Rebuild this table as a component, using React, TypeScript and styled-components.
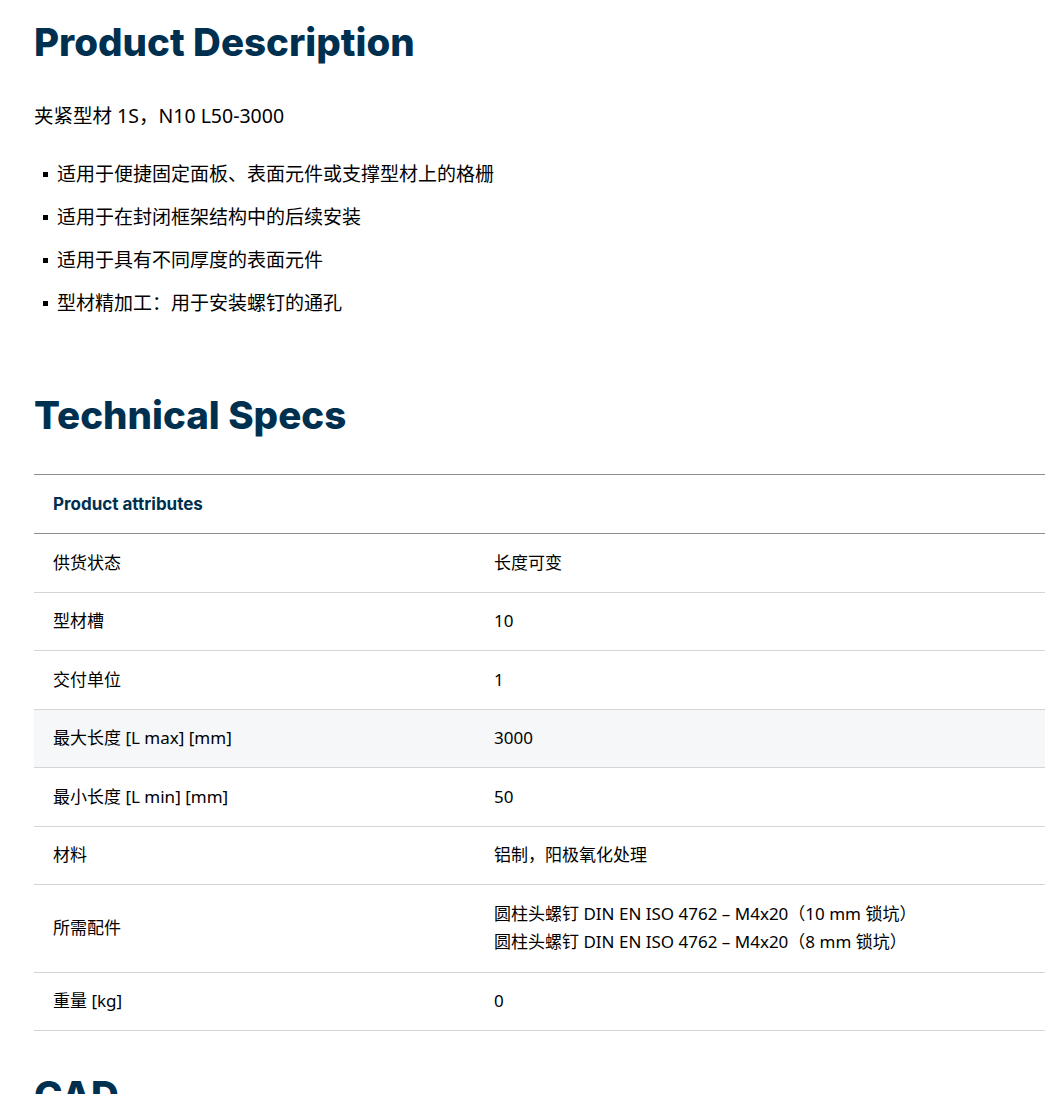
import React from "react";
import styled, { createGlobalStyle } from "styled-components";

const Global = createGlobalStyle`
  html, body { margin: 0; padding: 0; background: #fff; }
  body { overflow: hidden; }
`;

const Page = styled.div`
  padding: 0 0 0 34px;
  font-family: "Noto Sans", "Noto Sans CJK SC", sans-serif;
  color: #000;
`;

const Heading = styled.h2<{ $top: number }>`
  margin: ${(p) => p.$top}px 0 0 0;
  font-family: Inter, "Noto Sans", sans-serif;
  font-weight: 800;
  font-size: 38.5px;
  line-height: 48px;
  letter-spacing: 0px;
  color: #00304f;
`;

const Intro = styled.p`
  margin: 36px 0 0 0;
  font-size: 19.5px;
  line-height: 28px;
`;

const List = styled.ul`
  list-style: none;
  margin: 30px 0 0 0;
  padding: 0;
  display: flex;
  flex-direction: column;
  gap: 15px;
`;

const Item = styled.li`
  display: flex;
  align-items: center;
  gap: 9px;
  padding-left: 9px;
  font-size: 19px;
  line-height: 28px;
  &::before {
    content: "";
    width: 5px;
    height: 5px;
    background: #000;
    flex: none;
  }
`;

const Table = styled.div`
  margin-top: 35px;
  border-top: 1px solid #8a8f94;
  font-size: 17px;
`;

const HeadRow = styled.div`
  height: 58px;
  display: flex;
  align-items: center;
  padding-left: 19px;
  border-bottom: 1px solid #8a8f94;
  font-family: Inter, "Noto Sans", sans-serif;
  font-weight: 700;
  font-size: 17px;
  color: #00304f;
`;

const Row = styled.div<{ $hl?: boolean; $multi?: boolean }>`
  display: grid;
  grid-template-columns: 441px 1fr;
  align-items: center;
  min-height: 57.5px;
  padding: ${(p) => (p.$multi ? "14.5px" : "0")} 0 ${(p) => (p.$multi ? "14.5px" : "0")} 19px;
  border-bottom: 1px solid #d3d6d9;
  background: ${(p) => (p.$hl ? "#f5f7f9" : "#fff")};
  line-height: 28px;
`;

const Cell = styled.div``;

const rows: { k: string; v: string[]; hl?: boolean }[] = [
  { k: "供货状态", v: ["长度可变"] },
  { k: "型材槽", v: ["10"] },
  { k: "交付单位", v: ["1"] },
  { k: "最大长度 [L max] [mm]", v: ["3000"], hl: true },
  { k: "最小长度 [L min] [mm]", v: ["50"] },
  { k: "材料", v: ["铝制，阳极氧化处理"] },
  {
    k: "所需配件",
    v: [
      "圆柱头螺钉 DIN EN ISO 4762 – M4x20（10 mm 锁坑）",
      "圆柱头螺钉 DIN EN ISO 4762 – M4x20（8 mm 锁坑）",
    ],
  },
  { k: "重量 [kg]", v: ["0"] },
];

export default function App() {
  return (
    <>
      <Global />
      <Page>
        <Heading $top={18}>Product Description</Heading>
        <Intro>夹紧型材 1S，N10 L50-3000</Intro>
        <List>
          <Item>适用于便捷固定面板、表面元件或支撑型材上的格栅</Item>
          <Item>适用于在封闭框架结构中的后续安装</Item>
          <Item>适用于具有不同厚度的表面元件</Item>
          <Item>型材精加工：用于安装螺钉的通孔</Item>
        </List>
        <Heading $top={74}>Technical Specs</Heading>
        <Table>
          <HeadRow>Product attributes</HeadRow>
          {rows.map((r) => (
            <Row key={r.k} $hl={r.hl} $multi={r.v.length > 1}>
              <Cell>{r.k}</Cell>
              <Cell>
                {r.v.map((line) => (
                  <div key={line}>{line}</div>
                ))}
              </Cell>
            </Row>
          ))}
        </Table>
        <Heading $top={40}>CAD</Heading>
      </Page>
    </>
  );
}
